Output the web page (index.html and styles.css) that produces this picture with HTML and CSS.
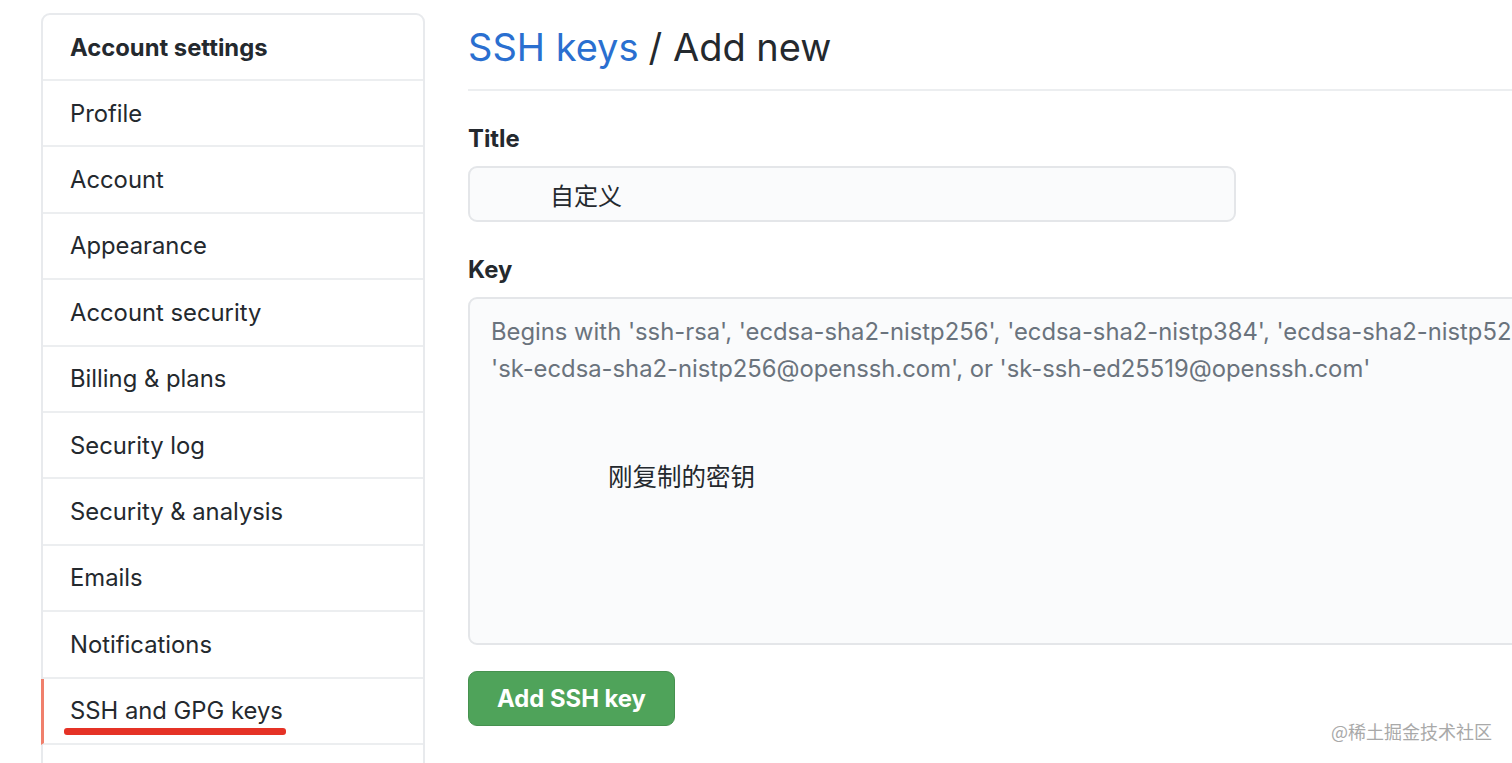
FILE: index.html
```html
<!DOCTYPE html>
<html lang="en">
	<head>
		<meta charset="UTF-8">
		<meta name="viewport" content="width=device-width, initial-scale=1.0">
		<title>SSH keys / Add new</title>
		<link rel="stylesheet" href="styles.css">
	</head>
	<body>
	<nav class="menu">
		<h3 class="menu-heading">Account settings</h3>
		<a class="menu-item" href="#">Profile</a>
		<a class="menu-item" href="#">Account</a>
		<a class="menu-item" href="#">Appearance</a>
		<a class="menu-item" href="#">Account security</a>
		<a class="menu-item" href="#">Billing &amp; plans</a>
		<a class="menu-item" href="#">Security log</a>
		<a class="menu-item" href="#">Security &amp; analysis</a>
		<a class="menu-item" href="#">Emails</a>
		<a class="menu-item" href="#">Notifications</a>
		<a class="menu-item selected" href="#"><span class="marked">SSH and GPG keys</span></a>
		<div class="menu-item"></div>
	</nav>
	<main class="content">
		<h2 class="subhead"><a href="#">SSH keys</a> / Add new</h2>
		<form>
			<label class="field-label" for="title">Title</label>
			<div id="title" class="input-title">自定义</div>

			<label class="field-label" for="key">Key</label>
			<div id="key" class="input-key">
				<p class="placeholder">Begins with 'ssh-rsa', 'ecdsa-sha2-nistp256', 'ecdsa-sha2-nistp384', 'ecdsa-sha2-nistp521', 'ssh-ed25519',<br />'sk-ecdsa-sha2-nistp256@openssh.com', or 'sk-ssh-ed25519@openssh.com'</p>
				<p class="pasted">刚复制的密钥</p>
			</div>

			<div class="btn-primary" role="button">Add SSH key</div>
		</form>
	</main>
	<div class="watermark">@稀土掘金技术社区</div>
	</body>
</html>
```

FILE: styles.css
```css
html, body {
	height: 763px;
	overflow: hidden;
}
body {
	margin: 0;
	padding: 13px 0 0 41px;
	display: flex;
	gap: 43px;
	font-family: Inter, 'Noto Sans CJK SC', sans-serif;
	color: #24292e;
	background: #fff;
	position: relative;
	box-sizing: border-box;
}
.menu {
	width: 384px;
	flex: none;
	display: flex;
	flex-direction: column;
	border: 2px solid #e8eaed;
	border-radius: 9px 9px 0 0;
	box-sizing: border-box;
	align-self: flex-start;
}
.menu-heading {
	margin: 0;
	height: 66px;
	flex: none;
	display: flex;
	align-items: center;
	padding-left: 27px;
	font-size: 23.8px;
	font-weight: 700;
	border-bottom: 2px solid #eceef0;
	box-sizing: border-box;
}
.menu-item {
	height: 66.4px;
	display: flex;
	align-items: center;
	padding-left: 27px;
	font-size: 23.8px;
	color: #24292e;
	text-decoration: none;
	border-bottom: 2px solid #eceef0;
	box-sizing: border-box;
	flex: none;
}
.menu-item.selected {
	border-left: 3px solid #f0806c;
	padding-left: 26px;
	margin-left: -2px;
}
.marked {
	position: relative;
}
.marked::after {
	content: "";
	position: absolute;
	left: -6px;
	right: -3px;
	bottom: -10px;
	height: 7px;
	border-radius: 3px;
	background: #e53226;
}
.content {
	flex: 1;
	min-width: 0;
	overflow: hidden;
}
.subhead {
	margin: 0;
	height: 78px;
	display: flex;
	align-items: center;
	padding-bottom: 8px;
	font-size: 38px;
	font-weight: 400;
	border-bottom: 2px solid #eceef0;
	white-space: nowrap;
	box-sizing: border-box;
}
.subhead a {
	color: #2a6fd0;
	text-decoration: none;
	margin-right: 10px;
}
.field-label {
	display: block;
	font-size: 23.8px;
	font-weight: 700;
	margin: 33px 0 13px;
}
.input-title {
	width: 768px;
	height: 56px;
	box-sizing: border-box;
	background: #fafbfc;
	border: 2px solid #e4e6e9;
	border-radius: 9px;
	padding-left: 80px;
	display: flex;
	align-items: center;
	font-size: 24px;
}
.input-key {
	width: 1300px;
	height: 348px;
	box-sizing: border-box;
	background: #fafbfc;
	border: 2px solid #e4e6e9;
	border-radius: 9px;
	padding: 14px 21px;
}
.placeholder {
	margin: 0;
	font-size: 23.8px;
	line-height: 37px;
	color: #6a737d;
	white-space: nowrap;
}
.pasted {
	margin: 71px 0 0 117px;
	font-size: 24.5px;
}
.btn-primary {
	display: inline-flex;
	align-items: center;
	justify-content: center;
	margin-top: 26px;
	width: 207px;
	height: 55px;
	box-sizing: border-box;
	background: #4fa35a;
	border: 1px solid #46914f;
	border-radius: 9px;
	color: #fff;
	font-size: 23.8px;
	font-weight: 700;
	cursor: pointer;
}
.watermark {
	position: absolute;
	right: 20px;
	bottom: 19px;
	font-size: 18px;
	color: #a9a9a9;
	font-family: 'Noto Sans CJK SC', sans-serif;
}
```
